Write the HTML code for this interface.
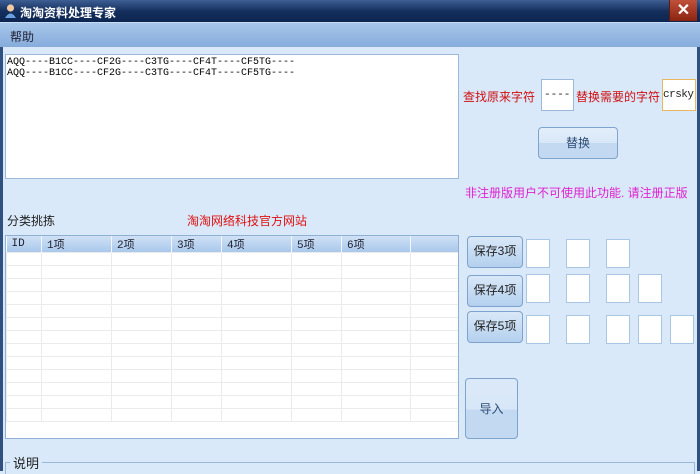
<!DOCTYPE html>
<html><head><meta charset="utf-8"><style>
*{margin:0;padding:0;box-sizing:border-box}
body{width:700px;height:471px;overflow:hidden;background:#d9e9f9;font-family:"Liberation Sans","Noto Sans CJK SC",sans-serif;font-size:12px;position:relative;color:#222}
.a{position:absolute}
.title{left:0;top:0;width:700px;height:22px;background:linear-gradient(#3d5f94,#15305e 50%,#0c2450);color:#fff;font-size:12px;font-weight:bold}
.menu{left:0;top:22px;width:700px;height:25px;background:linear-gradient(#a7c6ea,#86acdc);border-top:1px solid #c8dcf2}
.box{background:#fff;border:1px solid #9ab8d8}
.btn{border:1px solid #7ea3cc;border-radius:4px;background:linear-gradient(#e3eefa 0,#d8e7f7 50%,#c3d9f1 50%,#c3d9f1);text-align:center;color:#2a4a72;font-size:12px}
.sb{border:1px solid #7ea3cc;border-radius:4px;background:linear-gradient(#d9e8f8,#b4d0ee);text-align:center;line-height:29px;color:#222}
table{border-collapse:collapse;table-layout:fixed;font-size:11px}
td{border:1px solid #ebebeb;height:13px}
th{background:linear-gradient(#cfe1f5,#a9c8ec);border-right:1px solid #f2f7fd;height:16px;font-weight:normal;text-align:left;padding-left:5px;color:#223;font-family:"Liberation Mono","Noto Sans CJK SC",monospace;font-size:11px}
.ib{width:24px;height:29px;background:#fff;border:1px solid #a9c6e4}
</style></head><body>
<div class="a title"><span class="a" style="left:4px;top:3px;width:12px;height:15px"><svg width="13" height="16"><circle cx="6.5" cy="5" r="3.6" fill="#f2c9a0"/><path d="M1 15 Q6.5 6 12 15Z" fill="#6aa0e0"/></svg></span><span class="a" style="left:20px;top:4px">淘淘资料处理专家</span>
<div class="a" style="left:669px;top:0;width:28px;height:21px;background:linear-gradient(#c0503a,#8a2410);border-left:1px solid #5a1a10;color:#fff;text-align:center;font-size:16px;line-height:21px;font-weight:bold">✕</div></div>
<div class="a" style="left:0;top:22px;width:3px;height:449px;background:#2f5080"></div>
<div class="a" style="left:697px;top:22px;width:3px;height:449px;background:#2f5080"></div>
<div class="a menu"><span class="a" style="left:10px;top:5px;color:#223">帮助</span></div>
<div class="a box" style="left:5px;top:54px;width:454px;height:125px;font-family:'Liberation Mono',monospace;font-size:10px;line-height:11px;padding:2px 0 0 1px;color:#000">AQQ----B1CC----CF2G----C3TG----CF4T----CF5TG----<br>AQQ----B1CC----CF2G----C3TG----CF4T----CF5TG----</div>
<span class="a" style="left:463px;top:88px;color:#d01010">查找原来字符</span>
<div class="a box" style="left:541px;top:79px;width:33px;height:32px;font-family:'Liberation Mono',monospace;font-size:11px;line-height:30px;padding-left:2px">----</div>
<span class="a" style="left:576px;top:88px;color:#d01010">替换需要的字符</span>
<div class="a box" style="left:662px;top:79px;width:34px;height:32px;border-color:#e8b860;font-family:'Liberation Mono',monospace;font-size:11px;line-height:30px;letter-spacing:-0.5px">crsky</div>
<div class="a btn" style="left:538px;top:127px;width:80px;height:32px;line-height:30px">替换</div>
<span class="a" style="left:465px;top:184px;color:#e020d0">非注册版用户不可使用此功能. 请注册正版</span>
<span class="a" style="left:7px;top:212px">分类挑拣</span>
<span class="a" style="left:187px;top:212px;color:#e01010">淘淘网络科技官方网站</span>
<div class="a" style="left:5px;top:235px;width:454px;height:204px;background:#fff;border:1px solid #8fb0d4;overflow:hidden">
<table style="width:452px"><colgroup><col width="35"><col width="70"><col width="60"><col width="50"><col width="70"><col width="50"><col width="69"><col width="48"></colgroup>
<tr><th>ID</th><th>1项</th><th>2项</th><th>3项</th><th>4项</th><th>5项</th><th>6项</th><th></th></tr>
<tr><td></td><td></td><td></td><td></td><td></td><td></td><td></td><td></td></tr>
<tr><td></td><td></td><td></td><td></td><td></td><td></td><td></td><td></td></tr>
<tr><td></td><td></td><td></td><td></td><td></td><td></td><td></td><td></td></tr>
<tr><td></td><td></td><td></td><td></td><td></td><td></td><td></td><td></td></tr>
<tr><td></td><td></td><td></td><td></td><td></td><td></td><td></td><td></td></tr>
<tr><td></td><td></td><td></td><td></td><td></td><td></td><td></td><td></td></tr>
<tr><td></td><td></td><td></td><td></td><td></td><td></td><td></td><td></td></tr>
<tr><td></td><td></td><td></td><td></td><td></td><td></td><td></td><td></td></tr>
<tr><td></td><td></td><td></td><td></td><td></td><td></td><td></td><td></td></tr>
<tr><td></td><td></td><td></td><td></td><td></td><td></td><td></td><td></td></tr>
<tr><td></td><td></td><td></td><td></td><td></td><td></td><td></td><td></td></tr>
<tr><td></td><td></td><td></td><td></td><td></td><td></td><td></td><td></td></tr>
<tr><td></td><td></td><td></td><td></td><td></td><td></td><td></td><td></td></tr>
</table></div>
<div class="a sb" style="left:467px;top:236px;width:56px;height:32px">保存3项</div>
<div class="a sb" style="left:467px;top:275px;width:56px;height:32px">保存4项</div>
<div class="a sb" style="left:467px;top:311px;width:56px;height:32px">保存5项</div>
<div class="a ib" style="left:526px;top:239px"></div><div class="a ib" style="left:566px;top:239px"></div><div class="a ib" style="left:606px;top:239px"></div>
<div class="a ib" style="left:526px;top:274px"></div><div class="a ib" style="left:566px;top:274px"></div><div class="a ib" style="left:606px;top:274px"></div><div class="a ib" style="left:638px;top:274px"></div>
<div class="a ib" style="left:526px;top:315px"></div><div class="a ib" style="left:566px;top:315px"></div><div class="a ib" style="left:606px;top:315px"></div><div class="a ib" style="left:638px;top:315px"></div><div class="a ib" style="left:670px;top:315px"></div>
<div class="a btn" style="left:465px;top:378px;width:53px;height:61px;line-height:60px;background:linear-gradient(#dbe9f8 0,#d8e7f7 52%,#c3d9f1 52%)">导入</div>
<div class="a" style="left:5px;top:462px;width:690px;height:12px;border-top:1px solid #9ab8d8;border-left:1px solid #9ab8d8;border-right:1px solid #9ab8d8"></div>
<span class="a" style="left:10px;top:453px;background:#d9e9f9;padding:0 3px;font-size:13px">说明</span>
</body></html>
